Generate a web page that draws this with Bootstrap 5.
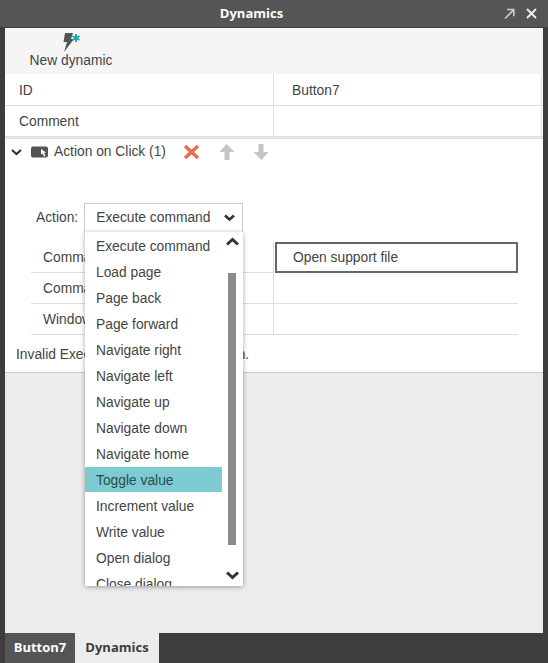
<!DOCTYPE html>
<html lang="en">
<head>
    <meta charset="UTF-8">
    <meta name="viewport" content="width=device-width, initial-scale=1.0">
    <title>Dynamics</title>
    <link href="https://cdn.jsdelivr.net/npm/bootstrap@5.3.0/dist/css/bootstrap.min.css" rel="stylesheet">
    <style>
        html, body { height: 100%; }
        body {
            font-family: "Liberation Sans", Arial, sans-serif;
            font-size: 13.8px;
            color: #444;
            background: #3d3d3d;
            overflow: hidden;
        }
        .app-window { height: 663px; }
        .title-bar {
            height: 28px;
            background: #555;
            border-bottom: 1px solid #3f3f3f;
            padding: 0 11px 0 5px;
            color: #fff;
        }
        .title-text {
            font-family: "Open Sans", sans-serif;
            font-weight: 700;
            font-size: 13px;
            padding-right: 6px;
        }
        .title-icons { gap: 11px; }
        .work-area { margin: 0 5px; background: #ececec; position: relative; }
        .tool-bar { height: 46px; background: #f5f5f5; }
        .tool-btn { width: 132px; padding-top: 3px; line-height: 16px; }
        .tool-btn svg { display: block; }
        .prop-table { background: #fff; }
        .prop-row { height: 31px; border-bottom: 1px solid #ddd; }
        .prop-row > div { line-height: 31px; }
        .prop-name { width: 269px; padding-left: 14px; border-right: 1px solid #ddd; }
        .prop-value { width: 268px; padding-left: 18px; border-right: 1px solid #ddd; }
        .prop-table .prop-row:first-child { height: 32px; }
        .prop-table .prop-row:first-child > div { line-height: 33px; }
        .action-panel {
            margin-top: 1px;
            height: 235px;
            background: #fff;
            border-top: 1px solid #ddd;
            border-bottom: 1px solid #ccc;
        }
        .action-head { height: 25px; padding: 1px 0 0 6px; gap: 6px; }
        .head-icon { margin-left: 3px; }
        .action-icons { gap: 18px; margin-left: 11px; }
        .action-form { padding: 39px 0 0 31px; }
        .select-box {
            width: 159px;
            height: 30px;
            margin-left: 6px;
            padding: 0 7px 0 11px;
            border: 1px solid #ccc;
            border-bottom-color: #bbb;
        }
        .cmd-grid { width: 487px; margin: 9px 0 0 -5px; }
        .cmd-row { height: 31px; border-bottom: 1px solid #ddd; }
        .cmd-row > div { line-height: 31px; }
        .cmd-name { width: 243px; padding-left: 12px; border-right: 1px solid #ddd; }
        .cmd-value { flex: 1; padding-left: 17px; }
        .cmd-row-input .cmd-value { margin-left: 1px; padding-left: 16px; border: 2px solid #666; line-height: 27px; height: 31px; }
        .cmd-row-input { border-bottom: 0; }
        .cmd-row-input .cmd-name { border-bottom: 1px solid #ddd; }
        .invalid-msg { padding: 12px 0 0 11px; line-height: 16px; }
        .list-popup {
            position: absolute;
            left: 80px;
            top: 204px;
            width: 158px;
            height: 354px;
            min-width: 0;
            margin: 0;
            padding: 1px 0 0;
            background: #fff;
            border: 0;
            border-radius: 0;
            box-shadow: 0 1px 5px rgba(0, 0, 0, .35);
            overflow: hidden;
        }
        .list-popup .dropdown-item {
            width: 137px;
            height: 26px;
            padding: 0 0 0 11px;
            line-height: 27px;
            color: #444;
            font-size: 13.8px;
        }
        .list-popup .dropdown-item.active { background: #7ccbd0; color: #2c4a4c; height: 25px; margin-bottom: 1px; }
        .scroll-thumb {
            position: absolute;
            left: 143px;
            top: 41px;
            width: 8px;
            height: 272px;
            background: #8a8b8c;
        }
        .scroll-arrow { position: absolute; left: 141px; }
        .tab-bar { height: 30px; background: #3d3d3d; padding-left: 5px; }
        .tab-item {
            font-family: "Open Sans", sans-serif;
            font-weight: 700;
            font-size: 13px;
            line-height: 29px;
            text-align: center;
        }
        .tab-off { width: 70px; background: #555; color: #fff; }
        .tab-on { width: 84px; background: #ececec; color: #3d3d3d; }
    </style>
</head>
<body>
    <div class="app-window d-flex flex-column">
        <div class="title-bar d-flex align-items-center justify-content-between flex-shrink-0">
            <span class="flex-grow-1 text-center title-text">Dynamics</span>
            <div class="title-icons d-flex align-items-center">
                <svg width="11" height="11" viewBox="0 0 11 11" fill="none" stroke="#ccc" stroke-width="1.6"><path d="M1 10.500 9.500 2M3 1.500h6.800v6.800"/></svg>
                <svg width="11" height="11" viewBox="0 0 11 11" fill="none" stroke="#eee" stroke-width="1.8"><path d="M1 1l9 9M10 1l-9 9"/></svg>
            </div>
        </div>

        <div class="work-area flex-grow-1">
            <div class="tool-bar">
                <div class="tool-btn d-flex flex-column align-items-center">
                    <svg width="20" height="22" viewBox="0 0 20 22">
                        <path d="M4 2h8L10 8h3L3 21l3-10H2.500z" fill="#555"/>
                        <path d="M15 3v8M11.500 5l7 4M18.500 5l-7 4" stroke="#1ba5a8" stroke-width="1.800" fill="none"/>
                    </svg>
                    <span>New dynamic</span>
                </div>
            </div>

            <div class="prop-table">
                <div class="prop-row d-flex"><div class="prop-name">ID</div><div class="prop-value">Button7</div></div>
                <div class="prop-row d-flex"><div class="prop-name">Comment</div><div class="prop-value"></div></div>
            </div>

            <div class="action-panel">
                <div class="action-head d-flex align-items-center">
                    <svg width="11" height="7" viewBox="0 0 11 7" fill="none" stroke="#333" stroke-width="2.200"><path d="M1 1l4.500 4 4.500-4"/></svg>
                    <svg class="head-icon" width="17" height="12" viewBox="0 0 17 12"><rect y="0.500" width="17" height="11" rx="2" fill="#555"/><path d="M10 3l5 3.500-2 .5 1.500 3-1.500 .5-1.300-3L10 8.500z" fill="#fff"/></svg>
                    <span>Action on Click (1)</span>
                    <div class="action-icons d-flex align-items-center">
                        <svg width="17" height="16" viewBox="0 0 17 16" fill="none" stroke="#e2714a" stroke-width="3.600"><path d="M2 2l13 12M15 2 2 14"/></svg>
                        <svg width="17" height="18" viewBox="0 0 17 18" fill="#c4c4c4"><path d="M8.500 1l8 8h-5v8h-5V9h-5z"/></svg>
                        <svg width="17" height="18" viewBox="0 0 17 18" fill="#c4c4c4"><path d="M8.500 17l-8-8h5V1h5v8h5z"/></svg>
                    </div>
                </div>
                <div class="action-form">
                    <div class="d-flex align-items-center">
                        <span>Action:</span>
                        <div class="select-box d-flex align-items-center justify-content-between">
                            <span>Execute command</span>
                            <svg width="11" height="8" viewBox="0 0 11 8" fill="none" stroke="#333" stroke-width="2.600"><path d="M1 1.500l4.500 4 4.500-4"/></svg>
                        </div>
                    </div>
                    <div class="cmd-grid">
                        <div class="cmd-row cmd-row-input d-flex"><div class="cmd-name">Command</div><div class="cmd-value">Open support file</div></div>
                        <div class="cmd-row d-flex"><div class="cmd-name">Command</div><div class="cmd-value"></div></div>
                        <div class="cmd-row d-flex"><div class="cmd-name">Window</div><div class="cmd-value"></div></div>
                    </div>
                </div>
                <div class="invalid-msg">Invalid Execute command declaration.</div>
            </div>

            <div class="dropdown-menu show list-popup">
                <a class="dropdown-item" href="#">Execute command</a>
                <a class="dropdown-item" href="#">Load page</a>
                <a class="dropdown-item" href="#">Page back</a>
                <a class="dropdown-item" href="#">Page forward</a>
                <a class="dropdown-item" href="#">Navigate right</a>
                <a class="dropdown-item" href="#">Navigate left</a>
                <a class="dropdown-item" href="#">Navigate up</a>
                <a class="dropdown-item" href="#">Navigate down</a>
                <a class="dropdown-item" href="#">Navigate home</a>
                <a class="dropdown-item active" href="#">Toggle value</a>
                <a class="dropdown-item" href="#">Increment value</a>
                <a class="dropdown-item" href="#">Write value</a>
                <a class="dropdown-item" href="#">Open dialog</a>
                <a class="dropdown-item" href="#">Close dialog</a>
                <div class="scroll-thumb"></div>
                <svg class="scroll-arrow" style="top:5px" width="13" height="9" viewBox="0 0 13 9" fill="none" stroke="#333" stroke-width="3"><path d="M1 7.500l5.500-5 5.500 5"/></svg>
                <svg class="scroll-arrow" style="top:339px" width="13" height="9" viewBox="0 0 13 9" fill="none" stroke="#333" stroke-width="3"><path d="M1 1.500l5.500 5 5.500-5"/></svg>
            </div>
        </div>

        <div class="tab-bar d-flex flex-shrink-0">
            <div class="tab-item tab-off">Button7</div>
            <div class="tab-item tab-on">Dynamics</div>
        </div>
    </div>

    <script src="https://cdn.jsdelivr.net/npm/bootstrap@5.3.0/dist/js/bootstrap.bundle.min.js"></script>
</body>
</html>
